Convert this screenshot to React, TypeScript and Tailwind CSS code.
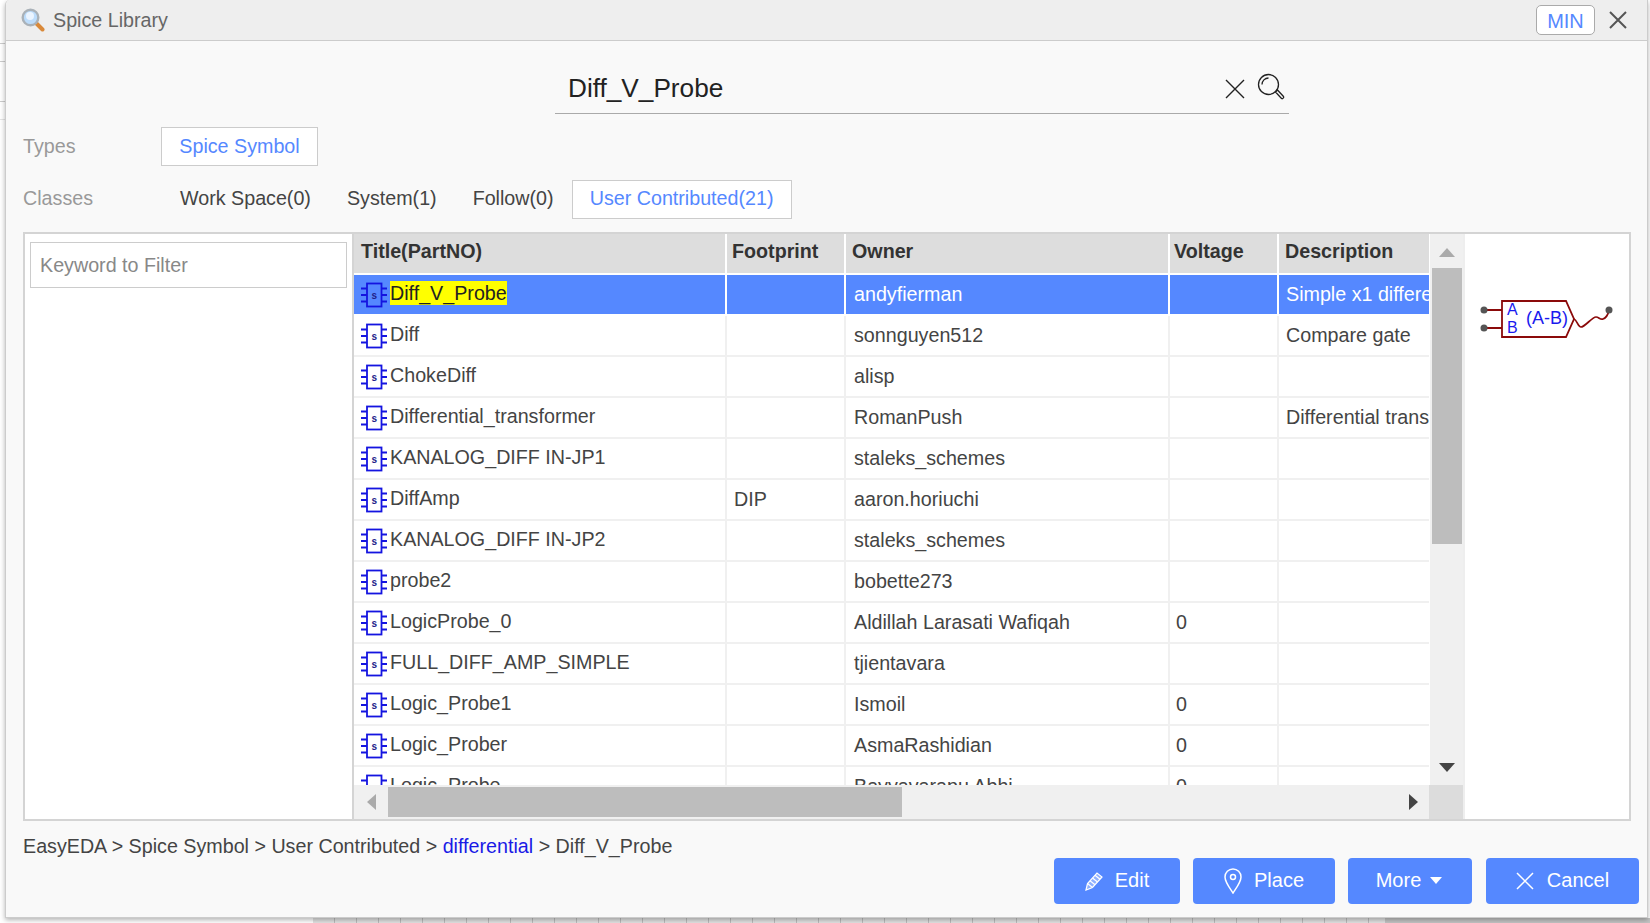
import React from "react";

const rows: [string, string, string, string, string][] = [
  ["Diff_V_Probe", "", "andyfierman", "", "Simple x1 differential probe"],
  ["Diff", "", "sonnguyen512", "", "Compare gate"],
  ["ChokeDiff", "", "alisp", "", ""],
  ["Differential_transformer", "", "RomanPush", "", "Differential transformer"],
  ["KANALOG_DIFF IN-JP1", "", "staleks_schemes", "", ""],
  ["DiffAmp", "DIP", "aaron.horiuchi", "", ""],
  ["KANALOG_DIFF IN-JP2", "", "staleks_schemes", "", ""],
  ["probe2", "", "bobette273", "", ""],
  ["LogicProbe_0", "", "Aldillah Larasati Wafiqah", "0", ""],
  ["FULL_DIFF_AMP_SIMPLE", "", "tjientavara", "", ""],
  ["Logic_Probe1", "", "Ismoil", "0", ""],
  ["Logic_Prober", "", "AsmaRashidian", "0", ""],
  ["Logic_Probe", "", "Bayyavarapu Abhi", "0", ""],
];

const cols = "grid grid-cols-[373px_119px_324px_109px_150px]";

function SymbolIcon() {
  return (
    <svg width="26" height="26" viewBox="0 0 26 26" className="shrink-0" fill="none" stroke="#1414e0" strokeWidth="1.800">
      <rect x="6" y="1.500" width="14.500" height="23" />
      <path d="M0 6.500h6M0 13h6M0 19.500h6M20.500 6.500H26M20.500 13H26M20.500 19.500H26" />
      <text x="13.300" y="17" textAnchor="middle" fontSize="10" fontWeight="700" fill="#22228a" stroke="none" fontFamily="Liberation Sans">s</text>
    </svg>
  );
}

function Row({ r, selected }: { r: [string, string, string, string, string]; selected: boolean }) {
  const cell = "h-full leading-[39px] whitespace-nowrap overflow-hidden";
  const line = selected ? "border-r-2 border-white" : "border-r-2 border-[#f0f0f0]";
  return (
    <div className={`${cols} h-[41px] shrink-0 border-b-2 ${selected ? "bg-[#5588ff] text-white border-white" : "bg-white text-[#444444] border-[#f0f0f0]"}`}>
      <div className={`h-full pl-[7px] whitespace-nowrap overflow-hidden ${line} flex items-center`}>
        <SymbolIcon />
        <span className={`ml-[3px] leading-[24px] mt-[-3px] ${selected ? "bg-[#ffff00] text-[#222222]" : ""}`}>{r[0]}</span>
      </div>
      <div className={`${cell} pl-[7px] ${line}`}>{r[1]}</div>
      <div className={`${cell} pl-[8px] ${line}`}>{r[2]}</div>
      <div className={`${cell} pl-[6px] ${line}`}>{r[3]}</div>
      <div className={`${cell} pl-[7px]`}>{r[4]}</div>
    </div>
  );
}

function Preview() {
  return (
    <svg width="166" height="60" viewBox="0 0 166 60" className="mt-[61px] ml-[1px]" fill="none">
      <path d="M18 15h18M18 33h18" stroke="#8b0a0a" strokeWidth="1.800" />
      <circle cx="18" cy="15" r="3.500" fill="#555555" />
      <circle cx="18" cy="33" r="3.500" fill="#555555" />
      <path d="M36 6v36h64l8-18-8-18z" stroke="#8b0a0a" strokeWidth="1.800" fill="#ffffff" />
      <path d="M108 24c3 1 4 8 7 8 4 0 11-10 15-10 3 0 4 3 7 2 3-1 5-4 6-9" stroke="#8b0a0a" strokeWidth="1.700" />
      <circle cx="143" cy="15" r="3.500" fill="#555555" />
      <text x="41" y="20" fill="#1a1aee" fontSize="16" fontFamily="Liberation Sans">A</text>
      <text x="41" y="38" fill="#1a1aee" fontSize="16" fontFamily="Liberation Sans">B</text>
      <text x="60" y="29" fill="#1a1aee" fontSize="18" fontFamily="Liberation Sans">(A-B)</text>
    </svg>
  );
}

function Btn({ icon, label, w, gap }: { icon?: React.ReactNode; label: string; w: string; gap: string }) {
  return (
    <div className={`${w} ${gap} h-[46px] rounded-[4px] bg-[#5588ff] text-white flex items-center justify-center text-[20px]`}>
      {icon}
      <span className="mt-[-2px]">{label}</span>
    </div>
  );
}

export default function App() {
  return (
    <div className="w-[1650px] h-[923px] overflow-hidden bg-white font-['Liberation_Sans',sans-serif] text-[19.7px] text-[#444444]">
      <div className="flex h-[918px]">
        <div className="w-[5px] shrink-0 flex flex-col">
          <div className="h-px mt-[43px] bg-[#cccccc]" />
          <div className="h-px mt-[17px] bg-[#cccccc]" />
          <div className="h-px mt-[39px] bg-[#cccccc]" />
          <div className="h-px mt-[17px] bg-[#e4e4e4]" />
        </div>
        <div className="relative w-[1643px] h-[918px] flex flex-col bg-[#f9f9f9] border-l border-r border-b border-[#cccccc] rounded-tl-[5px] shadow-[0_2px_5px_rgba(0,0,0,0.3)]">
          {/* title bar */}
          <div className="h-[41px] shrink-0 bg-[#eeeeee] border-b border-[#cccccc] rounded-tl-[5px] flex items-center pl-[15px] pr-[16px]">
            <svg width="24" height="24" viewBox="0 0 24 24" fill="none">
              <path d="M15.500 15.500l6 6" stroke="#d9893a" strokeWidth="4" strokeLinecap="round" />
              <circle cx="9.500" cy="9.500" r="7.800" fill="#bcdcfb" stroke="#a9b1b8" strokeWidth="2.400" />
              <circle cx="9" cy="8" r="4" fill="#eaf4ff" />
            </svg>
            <span className="ml-[8px] mt-[2px] text-[#666666]">Spice Library</span>
            <div className="ml-auto w-[59px] h-[30px] pt-[1px] bg-white border border-[#aaaaaa] rounded-[5px] text-[#5588ff] text-[20px] flex items-center justify-center">MIN</div>
            <svg width="20" height="20" viewBox="0 0 20 20" className="ml-[13px] mr-[3px]" stroke="#555555" strokeWidth="2">
              <path d="M2 2l16 16M18 2L2 18" />
            </svg>
          </div>

          {/* search */}
          <div className="h-[73px] shrink-0 pl-[549px] pt-[28px]">
            <div className="w-[734px] h-[45px] border-b border-[#aaaaaa] flex items-start pl-[13px] pr-[4px] pt-[3px]">
              <span className="text-[26.200px] leading-[32px] text-[#222222] font-normal">Diff_V_Probe</span>
              <svg width="20" height="20" viewBox="0 0 20 20" className="ml-auto mt-[7px]" stroke="#222222" strokeWidth="1.400">
                <path d="M1 1l18 18M19 1L1 19" />
              </svg>
              <svg width="28" height="28" viewBox="0 0 28 28" className="ml-[12px] mt-[1px]" fill="none" stroke="#222222" strokeWidth="1.300">
                <circle cx="11.500" cy="11.500" r="10" />
                <path d="M5 11.500a6.500 6.500 0 0 1 6.500-6.500" />
                <path d="M18.500 19l2-2 6 6.500c.8 1-.8 2.800-2 2z" />
              </svg>
            </div>
          </div>

          {/* types */}
          <div className="h-[38px] mt-[13px] shrink-0 flex items-center pl-[17px]">
            <span className="w-[138px] pt-[2px] text-[#999999]">Types</span>
            <div className="w-[157px] h-[39px] pt-[2px] bg-white border border-[#cccccc] text-[#5588ff] flex items-center justify-center">Spice Symbol</div>
          </div>

          {/* classes */}
          <div className="h-[39px] mt-[15px] shrink-0 flex items-center pl-[17px]">
            <span className="w-[138px] text-[#999999] pb-[2px]">Classes</span>
            <div className="flex items-center text-[#444444]">
              <span className="pl-[19px] pr-[18px] pb-[2px]">Work Space(0)</span>
              <span className="px-[18px] pb-[2px]">System(1)</span>
              <span className="px-[18px] pb-[2px]">Follow(0)</span>
              <div className="w-[220px] h-[39px] pb-[2px] bg-white border border-[#cccccc] text-[#5588ff] flex items-center justify-center">User Contributed(21)</div>
            </div>
          </div>

          {/* main panel */}
          <div className="ml-[17px] mt-[13px] w-[1608px] h-[589px] shrink-0 flex border-2 border-[#d4d4d4] bg-white">
            <div className="w-[329px] shrink-0 border-r-2 border-[#d4d4d4] pl-[5px] pt-[8px]">
              <div className="w-[317px] h-[46px] pt-[2px] border border-[#cccccc] bg-white pl-[9px] flex items-center text-[#888888]">Keyword to Filter</div>
            </div>
            <div className="w-[1109px] shrink-0 flex flex-col">
              <div className="flex flex-1 min-h-0">
                <div className="w-[1075px] flex flex-col overflow-hidden">
                  <div className={`${cols} h-[41px] shrink-0 bg-[#dddddd] font-bold text-[#333333] leading-[35px] border-b-2 border-white`}>
                    <div className="pl-[7px] border-r-2 border-white">Title(PartNO)</div>
                    <div className="pl-[5px] border-r-2 border-white">Footprint</div>
                    <div className="pl-[6px] border-r-2 border-white">Owner</div>
                    <div className="pl-[4px] border-r-2 border-white">Voltage</div>
                    <div className="pl-[6px]">Description</div>
                  </div>
                  {rows.map((r, i) => (
                    <Row key={r[0]} r={r} selected={i === 0} />
                  ))}
                </div>
                <div className="w-[1px] bg-white shrink-0" />
                <div className="w-[33px] bg-[#f0f0f0] flex flex-col items-center">
                  <svg width="16" height="10" viewBox="0 0 16 10" className="mt-[14px] mb-[10px] shrink-0" fill="#aaaaaa"><path d="M8 0l8 9H0z" /></svg>
                  <div className="w-[30px] h-[276px] bg-[#bdbdbd] shrink-0" />
                  <svg width="16" height="10" viewBox="0 0 16 10" className="mt-auto mb-[12px] shrink-0" fill="#444444"><path d="M0 0h16L8 9z" /></svg>
                </div>
              </div>
              <div className="h-[34px] shrink-0 flex">
                <div className="w-[1075px] bg-[#f0f0f0] flex items-center pl-[13px] pr-[10px]">
                  <svg width="10" height="16" viewBox="0 0 10 16" className="shrink-0" fill="#aaaaaa"><path d="M9 0v16L0 8z" /></svg>
                  <div className="ml-[11px] w-[514px] h-[30px] bg-[#bdbdbd]" />
                  <svg width="10" height="16" viewBox="0 0 10 16" className="ml-auto shrink-0" fill="#444444"><path d="M0 0l9 8-9 8z" /></svg>
                </div>
                <div className="w-[34px] bg-[#dcdcdc]" />
              </div>
            </div>
            <div className="flex-1 min-w-0 border-l-2 border-[#eeeeee] bg-white overflow-hidden">
              <Preview />
            </div>
          </div>

          {/* breadcrumb */}
          <div className="pl-[17px] mt-[13px] leading-[24px] shrink-0">
            EasyEDA &gt; Spice Symbol &gt; User Contributed &gt; <span className="text-[#1a1ae6]">differential</span> &gt; Diff_V_Probe
          </div>

          {/* actions */}
          <div className="flex justify-end pr-[8px] gap-[13px] shrink-0">
            <Btn
              w="w-[126px]"
              gap="gap-[12px]"
              label="Edit"
              icon={
                <svg width="18" height="20" viewBox="0 0 18 20" fill="none" stroke="#ffffff" strokeWidth="1.200">
                  <path d="M1 19l1.500-6.500L12 2l5 4-9.500 10.500z" fill="#ffffff" fillOpacity="0.35" />
                  <path d="M2.500 12.500l5 4M5 9.700l5 4M7.500 7l5 4M10 4.300l5 4" />
                </svg>
              }
            />
            <Btn
              w="w-[142px]"
              gap="gap-[12px]"
              label="Place"
              icon={
                <svg width="18" height="26" viewBox="0 0 18 26" fill="none" stroke="#ffffff" strokeWidth="1.500">
                  <path d="M9 25C5 19 1 14 1 9a8 8 0 0 1 16 0c0 5-4 10-8 16z" />
                  <circle cx="9" cy="9" r="2.500" />
                </svg>
              }
            />
            <div className="w-[124px] mr-[1px] h-[46px] rounded-[4px] bg-[#5588ff] text-white text-[20px] flex items-center justify-center gap-[9px]">
              <span className="mt-[-2px] ml-[-2px]">More</span>
              <svg width="12" height="7" viewBox="0 0 12 7" fill="#ffffff" className="mt-[-2px]"><path d="M0 0h12L6 7z" /></svg>
            </div>
            <Btn
              w="w-[153px]"
              gap="gap-[13px]"
              label="Cancel"
              icon={
                <svg width="18" height="18" viewBox="0 0 18 18" stroke="#ffffff" strokeWidth="1.500">
                  <path d="M1 1l16 16M17 1L1 17" />
                </svg>
              }
            />
          </div>
        </div>
      </div>

      {/* page behind the dialog, bottom edge */}
      <div className="flex h-[5px]">
        <div className="w-[313px] shrink-0 bg-white" />
        <div className="w-[1072px] shrink-0 bg-[repeating-linear-gradient(90deg,#e2e2e2_0,#e2e2e2_21px,#bbbbbb_21px,#bbbbbb_22px)]" />
        <div className="flex-1 bg-[#c4c4c4]" />
      </div>
    </div>
  );
}
